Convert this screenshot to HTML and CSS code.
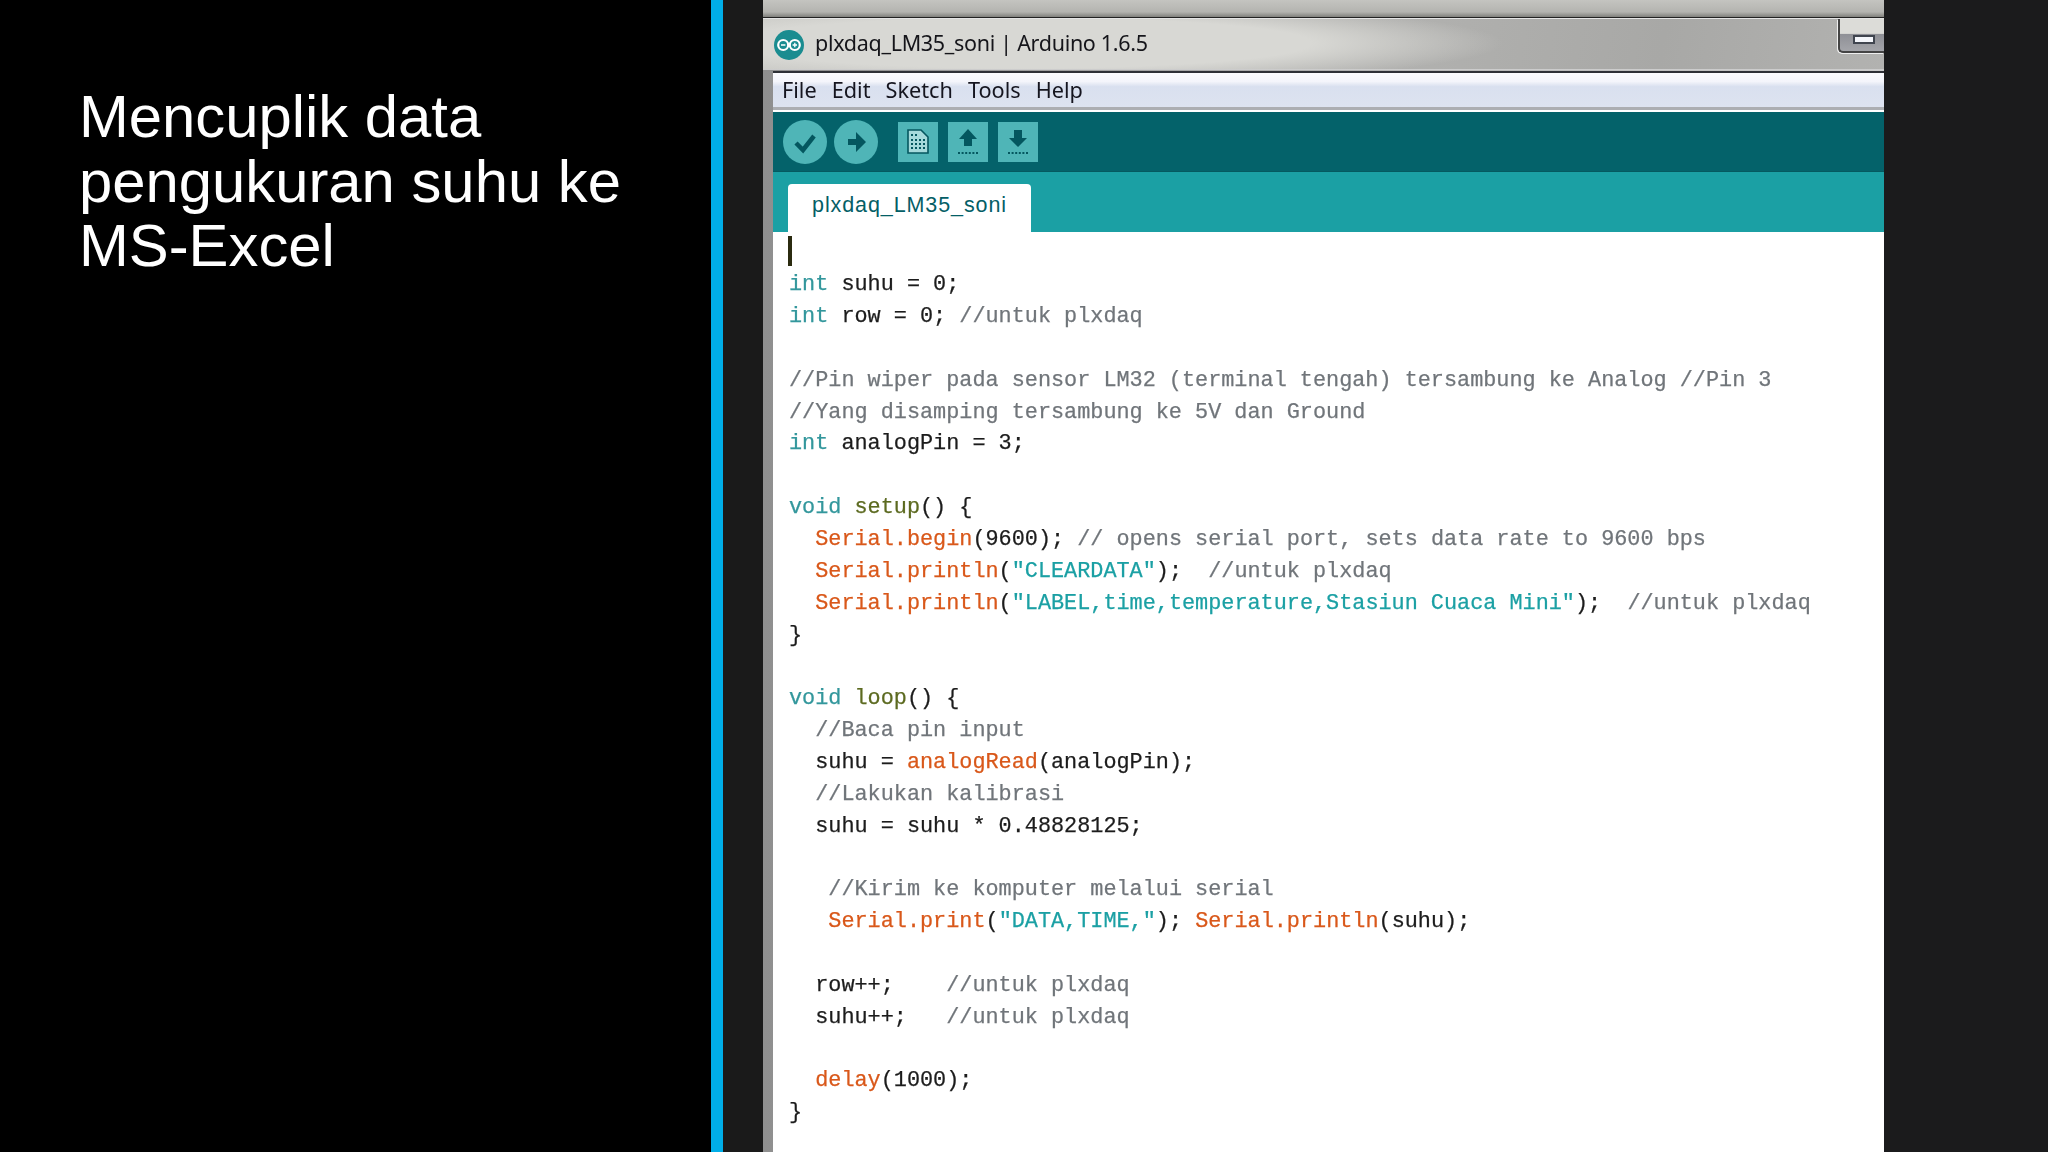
FILE: index.html
```html
<!DOCTYPE html>
<html lang="id">
<head>
<meta charset="utf-8">
<title>Mencuplik data pengukuran suhu ke MS-Excel</title>
<link rel="stylesheet" href="styles.css">
</head>
<body>
<div class="slide">
  <section class="left"><h1>Mencuplik data pengukuran suhu ke MS-Excel</h1></section>
  <div class="accent"></div>
  <div class="gutter"></div>
  <main class="shot">
    <div class="topband"></div>
    <div class="frame">
      <header class="titlebar">
        <svg class="logo" viewBox="0 0 30 30"><circle cx="15" cy="15" r="15" fill="#1a8c90"/><g fill="none" stroke="#fff" stroke-width="2.2"><circle cx="9.2" cy="15" r="5"/><circle cx="20.8" cy="15" r="5"/></g><path d="M7 15h4.4M18.6 15h4.4M20.8 12.8v4.4" stroke="#fff" stroke-width="1.3"/></svg>
        <span class="wintitle">plxdaq_LM35_soni | Arduino 1.6.5</span>
        <div class="minbtn"><span class="minglyph"></span></div>
      </header>
      <div class="content">
        <nav class="menu"><span>File</span><span>Edit</span><span>Sketch</span><span>Tools</span><span>Help</span></nav>
        <div class="toolbar">
          <svg class="tool round" viewBox="0 0 44 44"><circle cx="22" cy="22" r="22" fill="#4fb5b7"/><path d="M13 23l7 7 11-14" fill="none" stroke="#04575f" stroke-width="4.5"/></svg>
          <svg class="tool round" viewBox="0 0 44 44"><circle cx="22" cy="22" r="22" fill="#4fb5b7"/><path d="M14 19h8v-7l10 10-10 10v-7h-8z" fill="#04575f"/></svg>
          <svg class="tool square first" viewBox="0 0 40 40"><rect width="40" height="40" fill="#4fb5b7"/><path d="M10 8h13l7 7v16H10z" fill="#a5dadb" stroke="#04575f" stroke-width="1.6"/><path d="M13 13h2M17 13h2M13 18h14M13 22h14M13 26h14" stroke="#04575f" stroke-width="2" stroke-dasharray="2 2"/></svg>
          <svg class="tool square" viewBox="0 0 40 40"><rect width="40" height="40" fill="#4fb5b7"/><path d="M20 7l9 10h-5v7h-8v-7h-5z" fill="#04575f"/><path d="M10 31h20" stroke="#04575f" stroke-width="2" stroke-dasharray="2 1.6"/></svg>
          <svg class="tool square" viewBox="0 0 40 40"><rect width="40" height="40" fill="#4fb5b7"/><path d="M16 8h8v8h5l-9 9-9-9h5z" fill="#04575f"/><path d="M10 31h20" stroke="#04575f" stroke-width="2" stroke-dasharray="2 1.6"/></svg>
        </div>
        <div class="tabs"><div class="tab">plxdaq_LM35_soni</div></div>
        <div class="editor"><span class="caret"></span><pre class="code">

<span class="k">int</span> suhu = 0;
<span class="k">int</span> row = 0; <span class="c">//untuk plxdaq</span>

<span class="c">//Pin wiper pada sensor LM32 (terminal tengah) tersambung ke Analog //Pin 3</span>
<span class="c">//Yang disamping tersambung ke 5V dan Ground</span>
<span class="k">int</span> analogPin = 3;

<span class="k">void</span> <span class="s">setup</span>() {
  <span class="f">Serial.begin</span>(9600); <span class="c">// opens serial port, sets data rate to 9600 bps</span>
  <span class="f">Serial.println</span>(<span class="q">"CLEARDATA"</span>);  <span class="c">//untuk plxdaq</span>
  <span class="f">Serial.println</span>(<span class="q">"LABEL,time,temperature,Stasiun Cuaca Mini"</span>);  <span class="c">//untuk plxdaq</span>
}

<span class="k">void</span> <span class="s">loop</span>() {
  <span class="c">//Baca pin input</span>
  suhu = <span class="f">analogRead</span>(analogPin);
  <span class="c">//Lakukan kalibrasi</span>
  suhu = suhu * 0.48828125;

   <span class="c">//Kirim ke komputer melalui serial</span>
   <span class="f">Serial.print</span>(<span class="q">"DATA,TIME,"</span>); <span class="f">Serial.println</span>(suhu);

  row++;    <span class="c">//untuk plxdaq</span>
  suhu++;   <span class="c">//untuk plxdaq</span>

  <span class="f">delay</span>(1000);
}
</pre></div>
      </div>
    </div>
  </main>
  <div class="rest"></div>
</div>
</body>
</html>
```
FILE: styles.css
```css
html, body { margin: 0; padding: 0; background: #000; }
.slide { display: flex; width: 2048px; height: 1152px; overflow: hidden; }
.left { width: 711px; flex: none; background: #000; padding: 85px 60px 0 79px; box-sizing: border-box; }
.left h1 { margin: 0; font: 400 59.8px/64.6px "Liberation Sans", Arial, sans-serif; color: #fff; }
.accent { width: 12px; flex: none; background: #00aee8; }
.gutter { width: 40px; flex: none; background: #1a1a1a; }
.rest { flex: 1; background: #1b1b1c; }
.shot { width: 1121px; flex: none; display: flex; flex-direction: column; background: #a3a3a3; }
.topband { height: 17px; flex: none; background: linear-gradient(#c4c4c0, #b4b4b0 70%, #80807c); border-bottom: 1px solid #222; }
.frame { flex: 1; display: flex; flex-direction: column; min-height: 0; background: linear-gradient(90deg, #8f8f8f, #b4b4b4 60%, #c8c8c8); border-radius: 6px 0 0 0; }
.titlebar { height: 52px; flex: none; display: flex; align-items: flex-start; padding-left: 11px; background: radial-gradient(ellipse 480px 42px at 260px 24px, #d8d8d4 60%, rgba(216,216,212,0)), linear-gradient(100deg, #c4c4c0 0, #b0b0ae 60%, #a8a8a6 80%, #b2b2b0 100%); border-top: 1px solid #e4e4e4; box-sizing: border-box; border-bottom: 1px solid #ccc; }
.logo { width: 30px; height: 30px; margin-top: 11px; flex: none; }
.wintitle { margin: 8px 0 0 11px; font: 400 21.5px/32px "Noto Sans", "Open Sans", sans-serif; color: #15151a; filter: blur(.4px); letter-spacing: -.3px; }
.minbtn { margin-left: auto; width: 46px; height: 34px; box-sizing: border-box; border-left: 2px solid #444; border-bottom: 2px solid #444; border-radius: 0 0 0 5px; background: linear-gradient(#dcdcd8 45%, #8f9096 48%, #a4a5aa); display: flex; align-items: flex-end; justify-content: center; padding: 0 0 7px 4px; box-shadow: -1px 1px 0 #eee; }
.minglyph { width: 22px; height: 9px; box-sizing: border-box; background: #f4f6fb; border: 2px solid #40454f; }
.content { flex: 1; margin-left: 10px; display: flex; flex-direction: column; min-height: 0; border-top: 2px solid #2e3036; background: #fff; margin-top: 1px; }
.menu { height: 37px; flex: none; box-sizing: border-box; display: flex; gap: 15px; padding: 1px 0 0 9px; background: linear-gradient(#fbfbfe 0, #f4f5fb 25%, #d9e0ef 40%, #dde3f0 100%); border-bottom: 3px solid #acaeb2; font: 400 21.7px/32px "Noto Sans", "Open Sans", sans-serif; color: #15151f; }
.menu span { filter: blur(.4px); }
.toolbar { height: 60px; flex: none; margin-top: 2px; display: flex; align-items: center; padding-left: 10px; background: #04626a; border-bottom: 1px solid #055a60; box-sizing: border-box; }
.tool.round { width: 44px; height: 44px; margin-right: 7px; }
.tool.square { width: 40px; height: 40px; margin-right: 10px; }
.tool.first { margin-left: 13px; }
.tabs { height: 60px; flex: none; background: #1ba0a4; box-sizing: border-box; padding: 12px 0 0 15px; }
.tab { width: 243px; height: 48px; background: #fff; border-radius: 4px 4px 0 0; text-align: center; font: 400 21.5px/43px "Liberation Sans", Arial, sans-serif; letter-spacing: .9px; color: #045e66; }
.editor { flex: 1; position: relative; min-height: 0; padding: 5.4px 0 0 16px; background: #fff; overflow: hidden; }
.caret { position: absolute; left: 15px; top: 4px; width: 4px; height: 30px; background: #2b2b10; }
.code { margin: 0; font: 400 21.83px/31.84px "Liberation Mono", "Courier New", monospace; color: #1c1c1c; filter: blur(.45px); -webkit-text-stroke: .25px currentColor; }
.k { color: #33979c; }
.s { color: #5c6a20; }
.f { color: #d9581a; }
.q { color: #1ba0a4; }
.c { color: #70757a; }
```
